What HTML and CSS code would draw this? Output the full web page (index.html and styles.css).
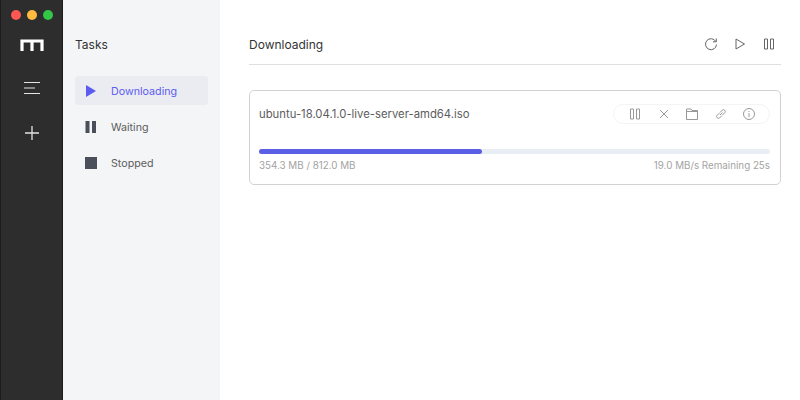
FILE: index.html
```html
<!DOCTYPE html>
<html lang="en">
<head>
    <meta charset="UTF-8">
    <title>Motrix</title>
    <link rel="stylesheet" href="styles.css">
</head>
<body>
    <div class="app">
        <aside class="rail">
            <div class="traffic">
                <span class="dot dot-red"></span>
                <span class="dot dot-yellow"></span>
                <span class="dot dot-green"></span>
            </div>
            <svg class="logo" width="24" height="12" viewBox="0 0 24 12"><path d="M2 12V2H22V12M12 3V12" fill="none" stroke="#fff" stroke-width="3.200"/></svg>
            <svg class="rail-icon menu-icon" width="18" height="14" viewBox="0 0 18 14"><path d="M1 1.500H17M1 7H12M1 12.500H17" fill="none" stroke="#e4e4e4" stroke-width="1.200"/></svg>
            <svg class="rail-icon plus-icon" width="16" height="16" viewBox="0 0 16 16"><path d="M8 1V15M1 8H15" fill="none" stroke="#e4e4e4" stroke-width="1.300"/></svg>
        </aside>

        <nav class="subnav">
            <h2>Tasks</h2>
            <ul class="task-menu">
                <li class="active">
                    <svg width="14" height="14" viewBox="0 0 14 14"><path d="M2 1L12 7L2 13Z" fill="#5b5bf0"/></svg>
                    <span>Downloading</span>
                </li>
                <li>
                    <svg width="14" height="14" viewBox="0 0 14 14"><path d="M1.500 1H5.500V13H1.500ZM8 1H12V13H8Z" fill="#4b4f5c"/></svg>
                    <span>Waiting</span>
                </li>
                <li>
                    <svg width="14" height="14" viewBox="0 0 14 14"><rect x="1" y="1" width="12" height="12" fill="#4b4f5c"/></svg>
                    <span>Stopped</span>
                </li>
            </ul>
        </nav>

        <main class="content">
            <header class="content-head">
                <h1>Downloading</h1>
                <div class="head-actions">
                    <svg width="14" height="14" viewBox="0 0 14 14"><path d="M11.800 4.500A5.500 5.500 0 1 0 12.500 7.500M12.300 1.500V4.800H9" fill="none" stroke="#666" stroke-width="1"/></svg>
                    <svg width="14" height="14" viewBox="0 0 14 14"><path d="M3 2L11.500 7L3 12Z" fill="none" stroke="#666" stroke-width="1"/></svg>
                    <svg width="14" height="14" viewBox="0 0 14 14"><path d="M2.500 2H5.500V12H2.500ZM8.500 2H11.500V12H8.500Z" fill="none" stroke="#666" stroke-width="1"/></svg>
                </div>
            </header>

            <section class="task-card">
                <div class="task-top">
                    <span class="task-name">ubuntu-18.04.1.0-live-server-amd64.iso</span>
                    <div class="task-actions">
                        <svg width="14" height="14" viewBox="0 0 14 14"><path d="M2.500 2H5.500V12H2.500ZM8.500 2H11.500V12H8.500Z" fill="none" stroke="#999" stroke-width="1"/></svg>
                        <svg width="14" height="14" viewBox="0 0 14 14"><path d="M3 3L11 11M11 3L3 11" fill="none" stroke="#999" stroke-width="1"/></svg>
                        <svg width="14" height="14" viewBox="0 0 14 14"><path d="M1.500 2H6L7 3.500H12.500V12.500H1.500ZM1.500 4.500H12.500" fill="none" stroke="#999" stroke-width="1"/></svg>
                        <svg width="14" height="14" viewBox="0 0 14 14"><path d="M6 8L8.500 5.500M5.500 6L3 8.500A1.800 1.800 0 0 0 5.500 11L8 8.500M6 5.500L8.500 3A1.800 1.800 0 0 1 11 5.500L8.500 8" fill="none" stroke="#999" stroke-width="1"/></svg>
                        <svg width="14" height="14" viewBox="0 0 14 14"><circle cx="7" cy="7" r="5.500" fill="none" stroke="#999" stroke-width="1"/><path d="M7 6.200V10M7 4V5" fill="none" stroke="#999" stroke-width="1"/></svg>
                    </div>
                </div>
                <div class="progress"><div class="progress-bar" style="width: 43.600%"></div></div>
                <div class="task-info">
                    <span class="task-size">354.3 MB / 812.0 MB</span>
                    <span class="task-speed">19.0 MB/s Remaining 25s</span>
                </div>
            </section>
        </main>
    </div>
</body>
</html>
```

FILE: styles.css
```css
* {
    box-sizing: border-box;
}

body {
    margin: 0;
    font-family: Inter, "Liberation Sans", sans-serif;
    background-color: #fff;
}

.app {
    display: flex;
    width: 800px;
    height: 400px;
    overflow: hidden;
}

.rail {
    width: 63px;
    flex-shrink: 0;
    background-color: #2d2d2d;
    border-left: 1px solid #1c1c1c;
    border-right: 1px solid #1c1c1c;
    display: flex;
    flex-direction: column;
    align-items: center;
}

.traffic {
    display: flex;
    gap: 6px;
    margin-top: 10px;
}

.dot {
    width: 10px;
    height: 10px;
    border-radius: 50%;
}

.dot-red { background-color: #fc5753; }
.dot-yellow { background-color: #fdbc40; }
.dot-green { background-color: #33c748; }

.logo {
    margin-top: 19px;
}

.menu-icon {
    margin-top: 30px;
}

.plus-icon {
    margin-top: 30px;
}

.subnav {
    width: 157px;
    flex-shrink: 0;
    background-color: #f4f5f7;
    padding: 37px 12px 0;
}

.subnav h2 {
    margin: 0 0 23px;
    font-size: 12px;
    line-height: 16px;
    font-weight: 400;
    color: #333;
}

.task-menu {
    list-style: none;
    margin: 0;
    padding: 0;
}

.task-menu li {
    display: flex;
    align-items: center;
    gap: 13px;
    height: 29px;
    margin-bottom: 7px;
    padding: 1px 0 0 9px;
    border-radius: 3px;
    font-size: 10.700px;
    color: #5c5c5c;
}

.task-menu li.active {
    background-color: #ebecf2;
    color: #5b5bf0;
}

.content {
    flex: 1;
    padding: 0 19px 0 29px;
}

.content-head {
    display: flex;
    justify-content: space-between;
    align-items: center;
    height: 65px;
    padding: 24px 5px 0 0;
    border-bottom: 1px solid #dfdfdf;
}

.content-head h1 {
    margin: 0;
    font-size: 12px;
    font-weight: 400;
    color: #333;
}

.head-actions {
    display: flex;
    gap: 15px;
}

.task-card {
    margin-top: 25px;
    height: 95px;
    border: 1px solid #d2d2d2;
    border-radius: 5px;
    padding: 13px 10px 0 9px;
}

.task-top {
    display: flex;
    justify-content: space-between;
    align-items: center;
    height: 20px;
}

.task-name {
    font-size: 11.300px;
    color: #5c5c5c;
}

.task-actions {
    display: flex;
    align-items: center;
    gap: 14.500px;
    height: 20px;
    padding: 0 13px 0 14px;
    border: 1px solid #f4f4f4;
    border-radius: 10px;
}

.progress {
    height: 5px;
    margin-top: 25px;
    border-radius: 3px;
    background-color: #e9eef5;
}

.progress-bar {
    height: 100%;
    border-radius: 3px;
    background-color: #5b5fe6;
}

.task-info {
    display: flex;
    justify-content: space-between;
    margin-top: 5px;
    font-size: 9.800px;
    line-height: 14px;
    color: #a3a3a3;
}
```
